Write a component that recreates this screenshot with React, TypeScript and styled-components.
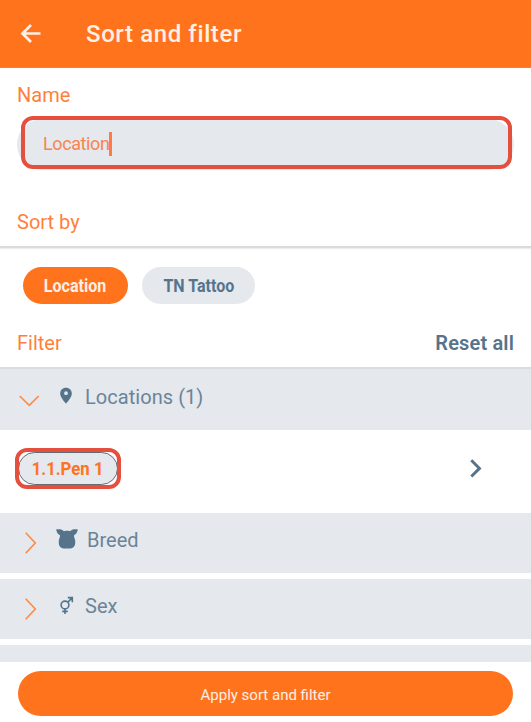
import React from "react";
import styled, { createGlobalStyle } from "styled-components";

const orange = "#ff731d";
const slate = "#55748c";
const mist = "#e5e8ed";
const red = "#e54f3d";

const GlobalStyle = createGlobalStyle`
  * { box-sizing: border-box; }
  body { margin: 0; background: #fff; font-family: Roboto, "Liberation Sans", sans-serif; overflow: hidden; }
  svg { display: block; flex: none; }
`;

const Screen = styled.main`
  display: flex;
  flex-direction: column;
  width: 531px;
  height: 722px;
  background: #fff;
  overflow: hidden;
`;

const Header = styled.header`
  flex: none;
  display: flex;
  align-items: center;
  gap: 42px;
  height: 68px;
  padding: 0 20px;
  background: ${orange};
  border-bottom: 1px solid #fb812f;
`;

const Text = styled.span<{ $size: number; $color: string; $weight?: number; $spacing?: number; $narrow?: number }>`
  display: inline-block;
  margin: 0;
  white-space: nowrap;
  line-height: 24px;
  font-size: ${(p) => p.$size}px;
  color: ${(p) => p.$color};
  font-weight: ${(p) => p.$weight ?? 400};
  letter-spacing: ${(p) => p.$spacing ?? 0}px;
  transform: ${(p) => (p.$narrow ? `scaleX(${p.$narrow})` : "none")};
`;

const NameSection = styled.section`
  flex: none;
  height: 142px;
  padding: 15px 17px 0;
`;

const Field = styled.div`
  position: relative;
  display: flex;
  align-items: center;
  width: 497px;
  height: 51px;
  margin-top: 12px;
  padding: 0 0 2px 26px;
  border-radius: 26px;
  background: ${mist};
`;

const FieldHighlight = styled.div`
  position: absolute;
  left: 4px;
  top: -3px;
  width: 491px;
  height: 53px;
  border: 4px solid ${red};
  border-radius: 12px;
`;

const Caret = styled.i`
  width: 3px;
  height: 24px;
  background: #fb7d42;
`;

const SectionHead = styled.div`
  flex: none;
  display: flex;
  justify-content: space-between;
  height: 38px;
  padding: 0 17px;
  border-bottom: 2px solid #d9dbdc;
  box-shadow: 0 1px 1px #ededed;
`;

const SortChips = styled.div`
  flex: none;
  display: flex;
  gap: 14px;
  height: 83px;
  padding: 19px 23px 0;
`;

const Chip = styled.button<{ $active?: boolean; $width: number }>`
  display: flex;
  align-items: center;
  justify-content: center;
  width: ${(p) => p.$width}px;
  height: 37px;
  padding: 0;
  border: 0;
  border-radius: 19px;
  font-family: inherit;
  background: ${(p) => (p.$active ? orange : mist)};
`;

const Row = styled.div<{ $height: number; $gap: number }>`
  flex: none;
  display: flex;
  height: ${(p) => p.$height}px;
  margin-bottom: ${(p) => p.$gap}px;
  padding-left: 18px;
  background: ${mist};
`;

const FirstRow = styled(Row)`
  height: 61px;
  padding-top: 1px;
`;

const RowChevron = styled.div`
  width: 37px;
  padding-top: 18px;
`;

const RowIcon = styled.div`
  width: 30px;
  padding-top: 14px;
`;

const RowLabel = styled.div<{ $shift?: number }>`
  padding: 15px 0 0 ${(p) => p.$shift ?? 0}px;
`;

const Selection = styled.div`
  flex: none;
  display: flex;
  justify-content: space-between;
  height: 83px;
  padding: 18px 47px 0 15px;
`;

const ChipHighlight = styled.div`
  width: 106px;
  height: 41px;
  border: 4px solid ${red};
  border-radius: 12px;
  overflow: hidden;
`;

const PenChip = styled.div`
  display: flex;
  align-items: center;
  justify-content: center;
  width: 100px;
  height: 33px;
  margin-left: -1px;
  border: 1px solid #666b70;
  border-radius: 17px;
  background: ${mist};
`;

const Arrow = styled.div`
  padding-top: 9px;
`;

const ApplyButton = styled.button`
  flex: none;
  width: 495px;
  height: 45px;
  margin: 9px 0 0 18px;
  padding: 2px 0 0;
  border: 0;
  border-radius: 23px;
  font-family: inherit;
  background: ${orange};
`;

const BackIcon = () => (
  <svg width="24" height="24" viewBox="0 0 24 24" fill="none" stroke="#fff0e5" strokeWidth="2.7">
    <path d="M20.5 11.5H3M11 3 2.5 11.5 11 20" />
  </svg>
);

const Down = () => (
  <svg width="24" height="24" viewBox="0 0 24 24" fill="none" stroke="#ff8a42" strokeWidth="1.6">
    <path d="M1.7 8 11.3 17.3 20.700 8" />
  </svg>
);

const Right = () => (
  <svg width="24" height="24" viewBox="0 0 24 24" fill="none" stroke="#ff8a42" strokeWidth="1.6">
    <path d="M7.7 1.7 17.3 12 7.7 22.2" />
  </svg>
);

const Pin = () => (
  <svg width="24" height="24" viewBox="0 0 24 24" fill={slate} fillRule="evenodd">
    <path d="M11 3.7c-3.4 0-5.8 2.4-5.8 5.7 0 3.7 3.5 7.2 5.8 10.3 2.3-3.1 5.800-6.600 5.800-10.300 0-3.300-2.400-5.700-5.800-5.700Zm0 3.600a1.900 1.900 0 1 1 0 3.800 1.900 1.900 0 0 1 0-3.800Z" />
  </svg>
);

const PigHead = () => (
  <svg width="24" height="24" viewBox="0 0 24 24" fill={slate}>
    <path d="M1.300 3.300C1 2.300 1.700 2 2.700 2.200c2.800-.2 5 .4 6.300 2 2-.5 4-.5 6 0 1.300-1.600 3.500-2.200 6.300-2 1-.2 1.700.1 1.400 1.100-.7 2.700-1.900 4.300-3.700 5-.1 1.200.4 2.500 1 4.200 1 5.500-1 8.900-4.700 9H8.700C5 21.400 3 18 4 12.500c.6-1.700 1.100-3 1-4.200C3.200 7.600 2 6 1.300 3.300Z" />
  </svg>
);

const SexIcon = () => (
  <svg width="24" height="24" viewBox="0 0 24 24" fill="none" stroke={slate} strokeWidth="1.6">
    <circle cx="10" cy="12" r="3.9" />
    <path d="m12.9 9.1 4-4M12.800 4.600h4.500v4.700M10 16v5M7.200 18.400h5.600" />
    <path d="M13.800 4h4v4Z" fill={slate} stroke="none" />
  </svg>
);

const ArrowIcon = () => (
  <svg width="16" height="22" viewBox="0 0 16 22" fill="none" stroke={slate} strokeWidth="2.9">
    <path d="M3.3 3.2 11.5 11.4 3.3 19.5" />
  </svg>
);

export default function App() {
  return (
    <>
      <GlobalStyle />
      <Screen>
        <Header>
          <BackIcon />
          <Text as="h1" $size={24} $color="#fff0e5" $weight={500} $spacing={0.6}>Sort and filter</Text>
        </Header>
        <NameSection>
          <Text $size={20} $color="#ff7f3c">Name</Text>
          <Field>
            <Text $size={18} $color="#fb8450" $spacing={-0.4}>Location</Text>
            <Caret />
            <FieldHighlight />
          </Field>
        </NameSection>
        <SectionHead>
          <Text $size={20} $color="#ff7f3c">Sort by</Text>
        </SectionHead>
        <SortChips>
          <Chip $active $width={105}>
            <Text $size={18} $color="#fff0e5" $weight={700} $narrow={0.89}>Location</Text>
          </Chip>
          <Chip $width={113}>
            <Text $size={18} $color={slate} $weight={700} $narrow={0.89}>TN Tattoo</Text>
          </Chip>
        </SortChips>
        <SectionHead>
          <Text $size={20} $color="#ff7f3c">Filter</Text>
          <Text $size={20} $color={slate} $weight={600} $spacing={0.15}>Reset all</Text>
        </SectionHead>
        <FirstRow $height={61} $gap={0}>
          <RowChevron><Down /></RowChevron>
          <RowIcon><Pin /></RowIcon>
          <RowLabel><Text $size={20} $color="#6b8498" $spacing={0.05}>Locations (1)</Text></RowLabel>
        </FirstRow>
        <Selection>
          <ChipHighlight>
            <PenChip>
              <Text $size={18} $color={orange} $weight={700} $narrow={0.93}>1.1.Pen 1</Text>
            </PenChip>
          </ChipHighlight>
          <Arrow><ArrowIcon /></Arrow>
        </Selection>
        <Row $height={60} $gap={6}>
          <RowChevron><Right /></RowChevron>
          <RowIcon><PigHead /></RowIcon>
          <RowLabel $shift={2}><Text $size={20} $color="#6b8498">Breed</Text></RowLabel>
        </Row>
        <Row $height={60} $gap={6}>
          <RowChevron><Right /></RowChevron>
          <RowIcon><SexIcon /></RowIcon>
          <RowLabel><Text $size={20} $color="#6b8498">Sex</Text></RowLabel>
        </Row>
        <Row $height={17} $gap={0} />
        <ApplyButton>
          <Text $size={15} $color="#fff0e5">Apply sort and filter</Text>
        </ApplyButton>
      </Screen>
    </>
  );
}
